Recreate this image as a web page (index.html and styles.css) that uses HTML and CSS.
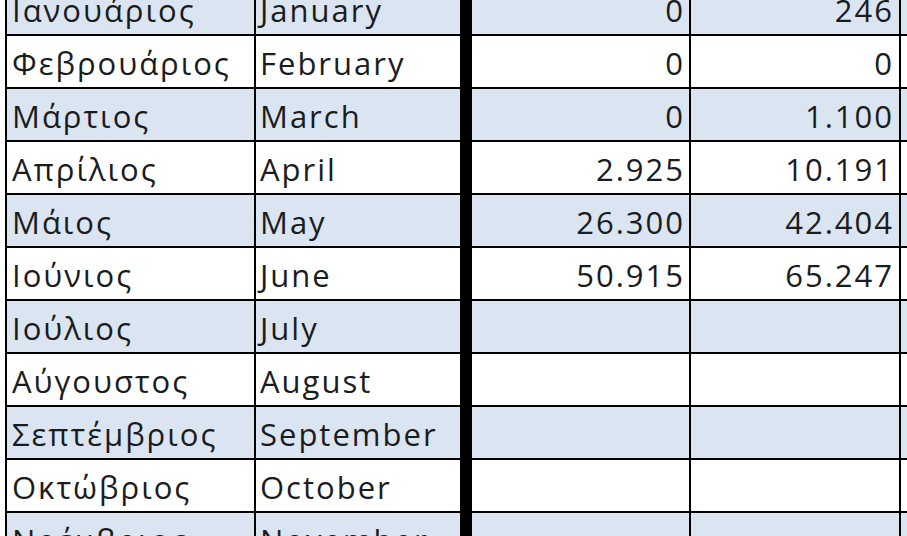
FILE: index.html
```html
<!DOCTYPE html>
<html lang="el">
<head>
<meta charset="utf-8">
<title>Μήνες</title>
<link rel="stylesheet" href="styles.css">
</head>
<body>
<div class="sheet">
  <div class="row blue"><div class="c gr">Ιανουάριος</div><div class="c en">January</div><div class="c num">0</div><div class="c num">246</div><div class="c rest"></div></div>
  <div class="row"><div class="c gr">Φεβρουάριος</div><div class="c en">February</div><div class="c num">0</div><div class="c num">0</div><div class="c rest"></div></div>
  <div class="row blue"><div class="c gr">Μάρτιος</div><div class="c en">March</div><div class="c num">0</div><div class="c num">1.100</div><div class="c rest"></div></div>
  <div class="row"><div class="c gr">Απρίλιος</div><div class="c en">April</div><div class="c num">2.925</div><div class="c num">10.191</div><div class="c rest"></div></div>
  <div class="row blue"><div class="c gr">Μάιος</div><div class="c en">May</div><div class="c num">26.300</div><div class="c num">42.404</div><div class="c rest"></div></div>
  <div class="row"><div class="c gr">Ιούνιος</div><div class="c en">June</div><div class="c num">50.915</div><div class="c num">65.247</div><div class="c rest"></div></div>
  <div class="row blue"><div class="c gr">Ιούλιος</div><div class="c en">July</div><div class="c num"></div><div class="c num"></div><div class="c rest"></div></div>
  <div class="row"><div class="c gr">Αύγουστος</div><div class="c en">August</div><div class="c num"></div><div class="c num"></div><div class="c rest"></div></div>
  <div class="row blue"><div class="c gr">Σεπτέμβριος</div><div class="c en">September</div><div class="c num"></div><div class="c num"></div><div class="c rest"></div></div>
  <div class="row"><div class="c gr">Οκτώβριος</div><div class="c en">October</div><div class="c num"></div><div class="c num"></div><div class="c rest"></div></div>
  <div class="row blue"><div class="c gr">Νοέμβριος</div><div class="c en">November</div><div class="c num"></div><div class="c num"></div><div class="c rest"></div></div>
</div>
</body>
</html>
```

FILE: styles.css
```css
html, body {
  margin: 0;
  padding: 0;
  background: #ffffff;
}
body {
  overflow: hidden;
  width: 907px;
  height: 536px;
}
.sheet {
  margin-top: -17px;
  margin-left: 5px;
  width: 920px;
  font-family: "Open Sans", "DejaVu Sans", sans-serif;
  font-size: 31px;
  font-weight: 500;
  letter-spacing: 2px;
  color: #1a1c1e;
}
.row {
  display: flex;
  height: 51px;
  border-bottom: 2px solid #000;
  background: #ffffff;
}
.row.blue {
  background: #dbe5f1;
}
.c {
  flex: none;
  box-sizing: border-box;
  height: 51px;
  padding-top: 4px;
  line-height: 47px;
  white-space: nowrap;
  overflow: hidden;
  border-right: 2px solid #000;
}
.gr {
  width: 251px;
  border-left: 2px solid #000;
  padding-left: 5px;
}
.en {
  width: 216px;
  padding-left: 4px;
  border-right: 12px solid #000;
}
.num {
  width: 219px;
  text-align: right;
  padding-right: 4px;
}
.num + .num {
  width: 210px;
  padding-right: 5px;
}
.rest {
  width: 20px;
  border-right: none;
}
```
